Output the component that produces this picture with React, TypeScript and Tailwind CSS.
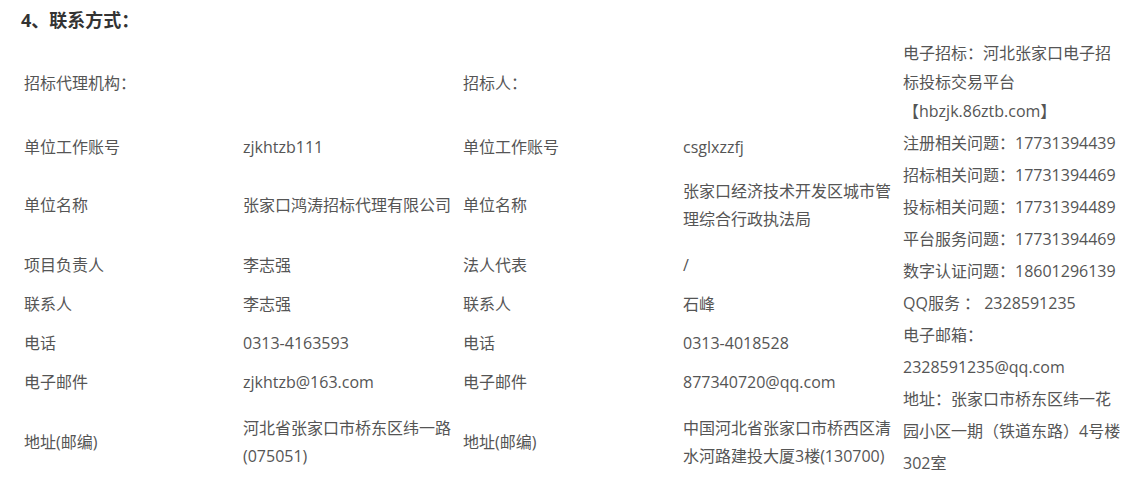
import React from "react";

const font = { fontFamily: '"Open Sans", "Noto Sans CJK SC", "Noto Sans", sans-serif' };

function Cell({ children, two }: { children?: React.ReactNode; two?: boolean }) {
  return (
    <div className={`flex items-center pl-[5px] pr-[2px] ${two ? "leading-[28px]" : "leading-[24px]"}`}>
      <div>{children}</div>
    </div>
  );
}

export default function App() {
  const rows: [string, string, string, string, boolean][] = [
    ["招标代理机构：", "", "招标人：", "", false],
    ["单位工作账号", "zjkhtzb111", "单位工作账号", "csglxzzfj", false],
    ["单位名称", "张家口鸿涛招标代理有限公司", "单位名称", "张家口经济技术开发区城市管理综合行政执法局", true],
    ["项目负责人", "李志强", "法人代表", "/", false],
    ["联系人", "李志强", "联系人", "石峰", false],
    ["电话", "0313-4163593", "电话", "0313-4018528", false],
    ["电子邮件", "zjkhtzb@163.com", "电子邮件", "877340720@qq.com", false],
    ["地址(邮编)", "河北省张家口市桥东区纬一路(075051)", "地址(邮编)", "中国河北省张家口市桥西区清水河路建投大厦3楼(130700)", true],
  ];
  return (
    <div className="w-[1131px] h-[485px] bg-white overflow-hidden text-[16px] text-[#555]" style={font}>
      <div className="h-[37px] pt-[7px] pl-[21px] text-[18px] font-bold leading-[26px] text-[#333]">4、联系方式：</div>
      <div className="ml-[19px] grid grid-cols-[219px_220px_220px_220px_225px] grid-rows-[92px_36px_80px_40px_38px_39px_40px_80px]">
        {rows.map((r, i) => (
          <React.Fragment key={i}>
            <Cell>{r[0]}</Cell>
            <Cell two={r[4]}>{r[1]}</Cell>
            <Cell>{r[2]}</Cell>
            <Cell two={r[4]}>{r[3]}</Cell>
            {i === 0 && (
              <div className="col-start-5 row-start-1 row-span-8 pl-[5px] pt-[2px] w-[225px]">
                <div className="w-[220px] leading-[29px]">电子招标：河北张家口电子招标投标交易平台【hbzjk.86ztb.com】</div>
                <div className="mt-[1px] w-[220px] leading-[32px]">
                  <div>注册相关问题：17731394439</div>
                  <div>招标相关问题：17731394469</div>
                  <div>投标相关问题：17731394489</div>
                  <div>平台服务问题：17731394469</div>
                  <div>数字认证问题：18601296139</div>
                  <div className="whitespace-pre">QQ服务 ： 2328591235</div>
                  <div>电子邮箱：</div>
                  <div>2328591235@qq.com</div>
                  <div>地址：张家口市桥东区纬一花园小区一期（铁道东路）4号楼302室</div>
                </div>
              </div>
            )}
          </React.Fragment>
        ))}
      </div>
    </div>
  );
}
